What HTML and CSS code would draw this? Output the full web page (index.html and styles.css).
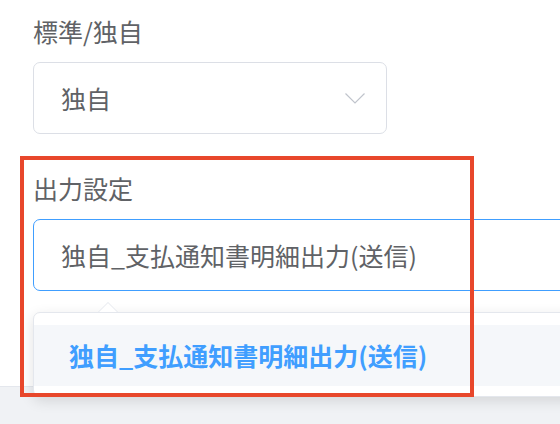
FILE: index.html
```html
<!DOCTYPE html>
<html lang="ja">
<head>
<meta charset="utf-8">
<link rel="stylesheet" href="styles.css">
</head>
<body>
<div class="page">
  <main class="form">
    <div class="form-item">
      <div class="form-label">標準/独自</div>
      <div class="select">
        <span class="select-value">独自</span>
        <svg class="chevron" width="20" height="11" viewBox="0 0 20 11"><path d="M0.5 0.5 L10 10 L19.5 0.5" fill="none" stroke="#c0c4cc" stroke-width="1.2"/></svg>
      </div>
    </div>
    <div class="form-item second">
      <div class="form-label">出力設定</div>
      <div class="input-wrap">
        <div class="select focused">
          <span class="select-value">独自_支払通知書明細出力(送信)</span>
        </div>
        <div class="popper">
          <div class="popper-arrow"></div>
          <ul class="options">
            <li class="option selected">独自_支払通知書明細出力(送信)</li>
          </ul>
        </div>
      </div>
      <div class="highlight"></div>
    </div>
  </main>
  <footer class="footer"></footer>
</div>
</body>
</html>
```
FILE: styles.css
```css
html, body {
  margin: 0;
  padding: 0;
  overflow: hidden;
  background: #ffffff;
}
body {
  font-family: "Noto Sans CJK JP", "Noto Sans", sans-serif;
  color: #606266;
}
.page {
  width: 560px;
  height: 424px;
  display: flex;
  flex-direction: column;
  overflow: hidden;
}
.form {
  flex: 1;
  padding-left: 33px;
  position: relative;
  z-index: 1;
}
.form-item {
  position: relative;
}
.form-item.second {
  margin-top: 23px;
}
.form-label {
  font-size: 25px;
  line-height: 62px;
  height: 62px;
  color: #606266;
}
.select {
  box-sizing: border-box;
  width: 354px;
  height: 72px;
  border: 1px solid #dcdfe6;
  border-radius: 7px;
  display: flex;
  align-items: center;
  justify-content: space-between;
  padding: 0 21px 0 27px;
  background: #fff;
}
.select.focused {
  width: 560px;
  border-color: #409eff;
}
.select-value {
  font-size: 25px;
  color: #606266;
  white-space: nowrap;
}
.chevron {
  display: block;
}
.input-wrap {
  position: relative;
}
.popper {
  position: absolute;
  top: calc(100% + 21px);
  left: 0;
  width: 560px;
  box-sizing: border-box;
  background: #fff;
  border: 1px solid #e4e7ed;
  border-radius: 7px;
  box-shadow: 0 4px 14px rgba(0, 0, 0, 0.12);
  padding: 12px 0 10px;
}
.popper-arrow,
.popper-arrow::after {
  position: absolute;
  width: 0;
  height: 0;
  border-style: solid;
  border-color: transparent;
}
.popper-arrow {
  top: -11px;
  left: 64px;
  border-width: 0 10px 10px;
  border-bottom-color: #e4e7ed;
}
.popper-arrow::after {
  content: "";
  top: 1px;
  left: -9px;
  border-width: 0 9px 9px;
  border-bottom-color: #fff;
}
.options {
  list-style: none;
  margin: 0;
  padding: 0;
}
.option {
  height: 61px;
  line-height: 61px;
  padding-left: 35px;
  font-size: 25px;
  white-space: nowrap;
  background: #f5f7fa;
}
.option.selected {
  color: #409eff;
  font-weight: 700;
}
.highlight {
  position: absolute;
  left: -13px;
  top: -1px;
  width: 454px;
  height: 241px;
  box-sizing: border-box;
  border: 4px solid #e8472b;
  pointer-events: none;
  z-index: 2;
}
.footer {
  height: 38px;
  flex-shrink: 0;
  box-sizing: border-box;
  border-top: 1px solid #e4e7ed;
  background: #f0f2f5;
}
```
